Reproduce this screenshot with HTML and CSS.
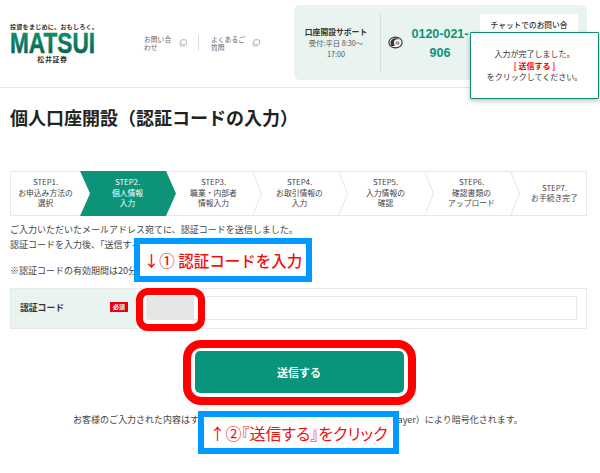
FILE: index.html
```html
<!DOCTYPE html>
<html lang="ja">
<head>
<meta charset="utf-8">
<title>個人口座開設</title>
<link rel="stylesheet" href="styles.css">
</head>
<body>
<div class="page">
  <header class="header">
    <div class="logo">
      <div class="logo-tag">投資をまじめに、おもしろく。</div>
      <svg class="logo-word" width="86" height="23" viewBox="0 0 86 23"><defs><linearGradient id="lg" x1="0" y1="0" x2="0" y2="1"><stop offset="0" stop-color="#0f9a78"/><stop offset="1" stop-color="#0b5a48"/></linearGradient></defs><text x="0" y="21" textLength="85" lengthAdjust="spacingAndGlyphs" class="logo-svgtext" fill="url(#lg)" stroke="url(#lg)" stroke-width=".5">MATSUI</text></svg>
      <div class="logo-name">松井証券</div>
    </div>
    <nav class="hnav">
      <a class="hlink hl1"><span>お問い合わせ</span><svg class="ext" width="8" height="8" viewBox="0 0 8 8"><rect x="2" y=".8" width="5.4" height="5" rx="1" fill="#fff" stroke="#aaa" stroke-width=".9"/><path d="M1 2.5v4.600h5" fill="none" stroke="#bbb" stroke-width=".8"/></svg></a>
      <i class="hsep"></i>
      <a class="hlink hl2"><span>よくあるご質問</span><svg class="ext" width="8" height="8" viewBox="0 0 8 8"><rect x="2" y=".8" width="5.4" height="5" rx="1" fill="#fff" stroke="#aaa" stroke-width=".9"/><path d="M1 2.5v4.600h5" fill="none" stroke="#bbb" stroke-width=".8"/></svg></a>
    </nav>
    <section class="support">
      <div class="sup-info">
        <b>口座開設サポート</b>
        <span>受付:平日 8:30〜<br>17:00</span>
      </div>
      <div class="sup-tel">
        <svg class="tel-ico" width="15" height="13" viewBox="0 0 15 13"><ellipse cx="7.500" cy="6.500" rx="6.600" ry="5.400" fill="#f4f4f4" stroke="#333" stroke-width="1.100"/><path d="M3.200 9.500C1.500 6.500 3 2.800 7 2.300c2-.2 3.500.3 4.500 1.300-2.500-.6-4.500 0-5.300 1.500-.7 1.400-.4 3 .6 4.600-1.500.5-2.800.5-3.600-.2z" fill="#333"/><rect x="7.500" y="5.500" width="3.800" height="3" rx=".6" fill="#999"/></svg>
        <div class="tel-num">0120-021-<br>906</div>
      </div>
      <div class="chat">チャットでのお問い合</div>
    </section>
    <div class="popup">入力が完了しました。<br><b>[ 送信する ]</b><br>をクリックしてください。</div>
  </header>

  <h1 class="title">個人口座開設（認証コードの入力）</h1>

  <ol class="steps">
    <li class="step s1"><span>STEP1.<br>お申込み方法の<br>選択</span></li>
    <li class="step s2"><span>STEP2.<br>個人情報<br>入力</span></li>
    <li class="step s3"><span>STEP3.<br>職業・内部者<br>情報入力</span></li>
    <li class="step s4"><span>STEP4.<br>お取引情報の<br>入力</span></li>
    <li class="step s5"><span>STEP5.<br>入力情報の<br>確認</span></li>
    <li class="step s6"><span>STEP6.<br>確認書類の<br>アップロード</span></li>
    <li class="step s7"><span>STEP7.<br>お手続き完了</span></li>
  </ol>

  <div class="intro">
    <p>ご入力いただいたメールアドレス宛てに、認証コードを送信しました。<br>認証コードを入力後、「送信する」ボタンをクリックしてください。</p>
    <p class="note">※認証コードの有効期間は20分です。</p>
  </div>

  <div class="form-row">
    <div class="form-label"><b>認証コード</b><em>必須</em></div>
    <div class="form-field"><div class="input"><i class="masked"></i></div></div>
  </div>

  <div class="actions"><button class="submit">送信する</button></div>

  <p class="foot">お客様のご入力された内容はすべて高度な暗号化通信SSL/TLS（Secure Socket Layer）により暗号化されます。</p>

  <div class="note1 callout">↓① 認証コードを入力</div>
  <div class="ring ring-input"></div>
  <div class="ring ring-btn"></div>
  <div class="note2 callout">↑②『送信する』をクリック</div>
</div>
</body>
</html>
```
FILE: styles.css
```css
* { box-sizing: border-box; }
html, body { margin: 0; padding: 0; background: #fff; }
body { font-family: "Noto Sans CJK JP", "Liberation Sans", sans-serif; color: #333; overflow: hidden; }
.page { position: relative; width: 600px; height: 473px; overflow: hidden; }

.header { position: relative; height: 88px; border-bottom: 1px solid #e6e6e6; display: flex; align-items: flex-start; padding: 5px 13px 0 10px; }
.logo { width: 90px; margin-top: 17px; display: flex; flex-direction: column; }
.logo-tag { font-size: 6.2px; line-height: 9px; font-weight: 700; color: #333; white-space: nowrap; letter-spacing: .12px; }
.logo-word { display: block; margin-top: 1px; overflow: visible; }
.logo-svgtext { font-family: "Liberation Sans", sans-serif; font-weight: 700; font-size: 29px; }
.logo-name { font-size: 7px; line-height: 9px; font-weight: 700; text-align: center; width: 85px; color: #333; letter-spacing: .6px; }

.hnav { display: flex; align-items: center; width: 194px; margin-top: 30px; padding-left: 44px; }
.hlink { display: flex; align-items: center; font-size: 6.8px; line-height: 8px; color: #666; }
.hlink span { display: block; }
.hl1 span { width: 28px; }
.hl2 span { width: 34px; }
.hl1 { width: 46px; }
.ext { margin-left: 7px; flex: none; }
.hsep { width: 1px; height: 16px; background: #ddd; margin: 0 12px 0 8px; }

.support { position: relative; width: 293px; height: 75px; border-radius: 6px; background: #e9f3f0; display: flex; align-items: center; }
.sup-info { width: 87px; height: 58px; border-right: 1px solid #d5dedb; display: flex; flex-direction: column; justify-content: center; align-items: center; text-align: center; padding-right: 2px; }
.sup-info b { font-size: 7.8px; line-height: 12px; color: #333; }
.sup-info span { font-size: 7.3px; line-height: 11px; color: #555; }
.sup-tel { display: flex; align-items: center; padding-left: 7px; width: 100px; }
.tel-ico { flex: none; }
.tel-num { width: 62px; margin-left: 6px; padding-top: 2px; color: #0d9478; font-family: "Liberation Sans", sans-serif; font-weight: 700; font-size: 12.5px; line-height: 19px; text-align: center; white-space: nowrap; }
.chat { position: absolute; left: 186px; top: 9px; width: 98px; height: 40px; padding-top: 5px; background: #fff; font-size: 7.7px; line-height: 11px; font-weight: 500; text-align: center; color: #333; white-space: nowrap; overflow: hidden; }

.popup { position: absolute; left: 470px; top: 32px; width: 129px; height: 67px; background: #fff; border: 1.5px solid #0f8c72; border-radius: 1px; box-shadow: 0 2px 5px rgba(0,0,0,.25); font-size: 8px; line-height: 11.5px; text-align: center; color: #333; padding-top: 15px; z-index: 2; }
.popup b { color: #f00; }

.title { margin: 19px 0 0 10px; font-size: 18px; line-height: 21px; font-weight: 700; color: #222; }

.steps { list-style: none; display: flex; margin: 43px 0 0 10px; padding: 0; width: 577px; height: 45px; background: #fff; border: 1px solid #e8e8e8; }
.step { position: relative; flex: none; display: flex; align-items: center; justify-content: center; text-align: center; font-size: 7.8px; line-height: 10.4px; color: #444; height: 42px; }
.step span { position: relative; z-index: 1; }
.s1 { width: 69px; }
.s2 { width: 86px; color: #fff; }
.s3, .s4, .s5, .s6 { width: 86px; padding-left: 9px; }
.s2 { padding-left: 9px; }
.s7 { width: 78px; padding-left: 11px; }
.s2::before { content: ""; position: absolute; left: 0; top: -1px; width: 96px; height: 45px; background: #0d9478; clip-path: polygon(0 0, 86px 0, 96px 50%, 86px 100%, 0 100%, 10px 50%); }
.s3::before, .s4::before, .s5::before, .s6::before { content: ""; position: absolute; left: 86px; top: -1px; width: 10px; height: 45px; background: #e4e4e4; clip-path: polygon(0 0, 1px 0, 10px 50%, 1px 100%, 0 100%, 9px 50%); }

.intro { margin: 7px 0 0 10px; font-size: 9px; line-height: 14.5px; color: #444; }
.intro p { margin: 0; white-space: nowrap; }
.intro .note { margin-top: 12px; }

.form-row { display: flex; margin: 9px 0 0 10px; width: 577px; height: 41px; border: 1px solid #e8e8e8; }
.form-label { width: 125px; background: #e9f3f0; display: flex; align-items: center; justify-content: space-between; padding: 0 8px 2px 9px; }
.form-label b { font-size: 8.8px; color: #333; }
.form-label em { font-style: normal; font-size: 6px; line-height: 10px; height: 10px; padding: 0 3px; background: #e60012; color: #fff; font-weight: 700; white-space: nowrap; }
.form-field { flex: 1; display: flex; align-items: center; padding: 0 9px 0 10px; }
.input { flex: 1; height: 24px; border: 1px solid #e6e6e6; border-radius: 2px; background: #fff; position: relative; overflow: hidden; }
.masked { display: block; width: 47px; height: 100%; background: #e6e6e6; border-radius: 2px 0 0 2px; }

.actions { display: flex; justify-content: center; margin-top: 22px; padding-right: 2px; }
.submit { width: 209px; height: 42px; border: 0; border-radius: 5px; background: #09957b; color: #fff; font-family: inherit; font-size: 11px; font-weight: 700; padding: 0; }

.foot { margin: 20px 0 0; padding-left: 73px; font-size: 9px; line-height: 14px; color: #444; white-space: nowrap; }

.callout { position: absolute; background: #fff; border: 6px solid #0099ff; color: #f01010; display: flex; align-items: center; justify-content: center; white-space: nowrap; z-index: 3; font-weight: 500; }
.note1 { left: 134px; top: 238px; width: 178px; height: 44px; font-size: 15.5px; }
.note2 { left: 198px; top: 411px; width: 201px; height: 43px; font-size: 16px; font-weight: 400; font-feature-settings: "palt"; }
.ring { position: absolute; border: 7px solid #f00; background: transparent; z-index: 3; }
.ring-input { left: 136px; top: 288px; width: 69px; height: 43px; border-radius: 12px; }
.ring-btn { left: 183px; top: 340px; width: 233px; height: 65px; border-radius: 18px; border-width: 8px; }
```
